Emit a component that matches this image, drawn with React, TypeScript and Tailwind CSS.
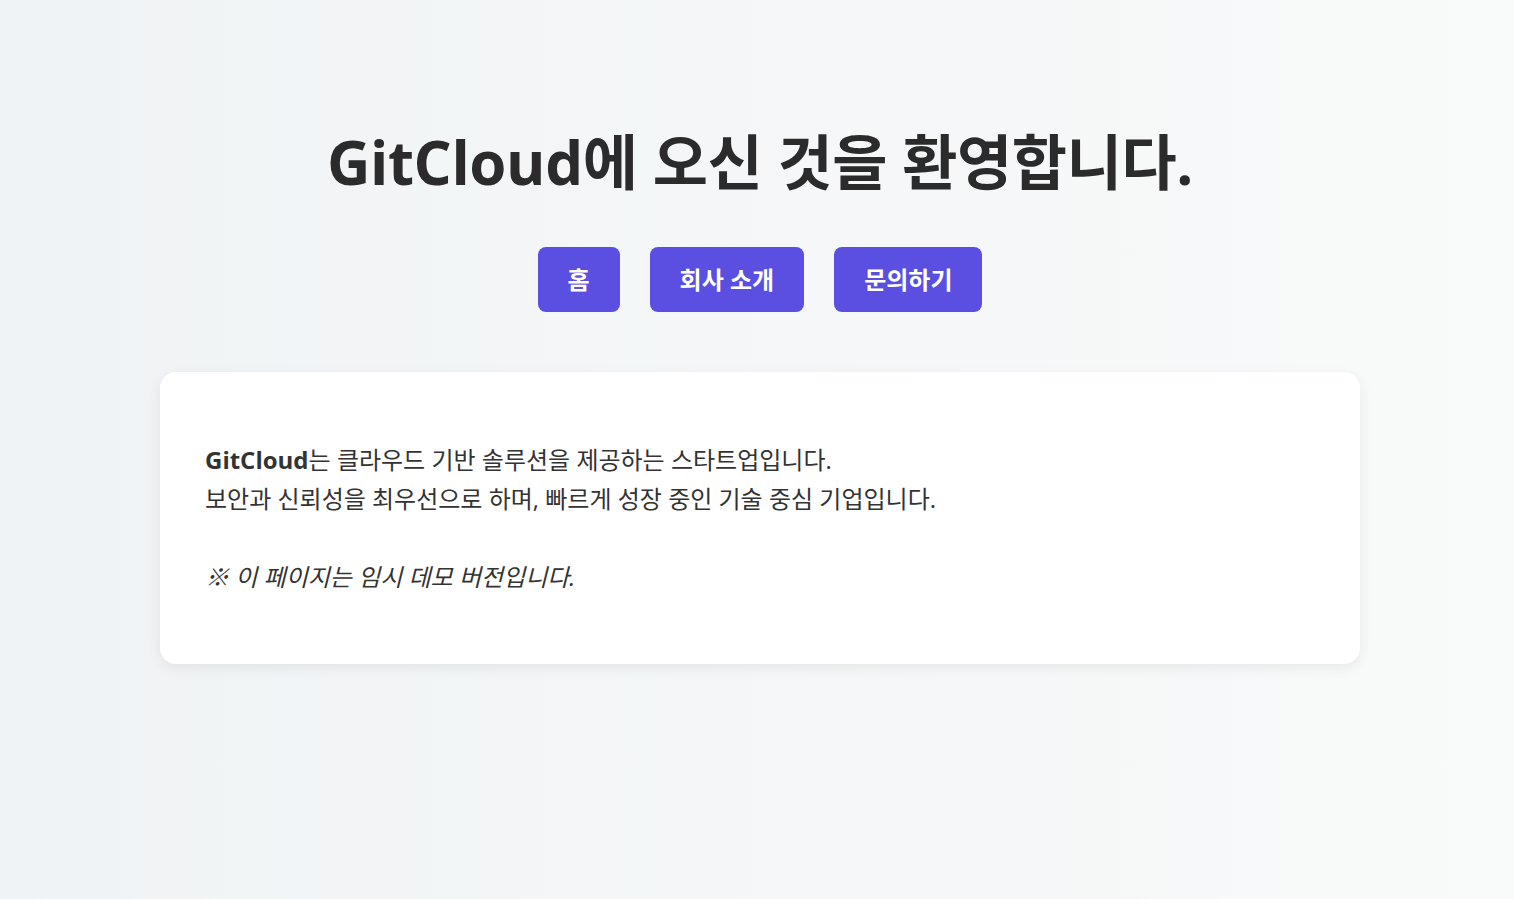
import React from "react";

const navItems = ["홈", "회사 소개", "문의하기"];

export default function App() {
  return (
    <div
      className="min-h-[899px] w-full bg-gradient-to-r from-[#f0f3f5] to-[#f9fafa] text-[#2f2f2f]"
      style={{ fontFamily: '"Open Sans", "Noto Sans CJK KR", sans-serif' }}
    >
      <div className="flex flex-col items-center pl-[6px] pt-[122px]">
        {/* Title */}
        <h1 className="text-[60px] font-bold leading-[80px] tracking-[-0.4px] text-[#2b2b2b]">
          GitCloud에 오신 것을 환영합니다.
        </h1>

        {/* Nav buttons */}
        <nav className="mt-[45px] flex gap-[30px]">
          {navItems.map((item) => (
            <a
              key={item}
              href="#"
              className="flex h-[65px] items-center rounded-[8px] bg-[#5b4fe2] px-[30px] text-[24px] font-bold text-white"
            >
              {item}
            </a>
          ))}
        </nav>

        {/* Intro card */}
        <section className="mt-[60px] w-[1200px] rounded-[16px] bg-white px-[45px] py-[44px] shadow-[0_4px_14px_rgba(0,0,0,0.07)]">
          <p className="my-[24px] text-[24px] leading-[39px] text-[#333]">
            <strong className="font-bold">GitCloud</strong>는 클라우드 기반 솔루션을 제공하는 스타트업입니다.
            <br />
            보안과 신뢰성을 최우선으로 하며, 빠르게 성장 중인 기술 중심 기업입니다.
            <br />
            <br />
            <em className="italic">※ 이 페이지는 임시 데모 버전입니다.</em>
          </p>
        </section>
      </div>
    </div>
  );
}
